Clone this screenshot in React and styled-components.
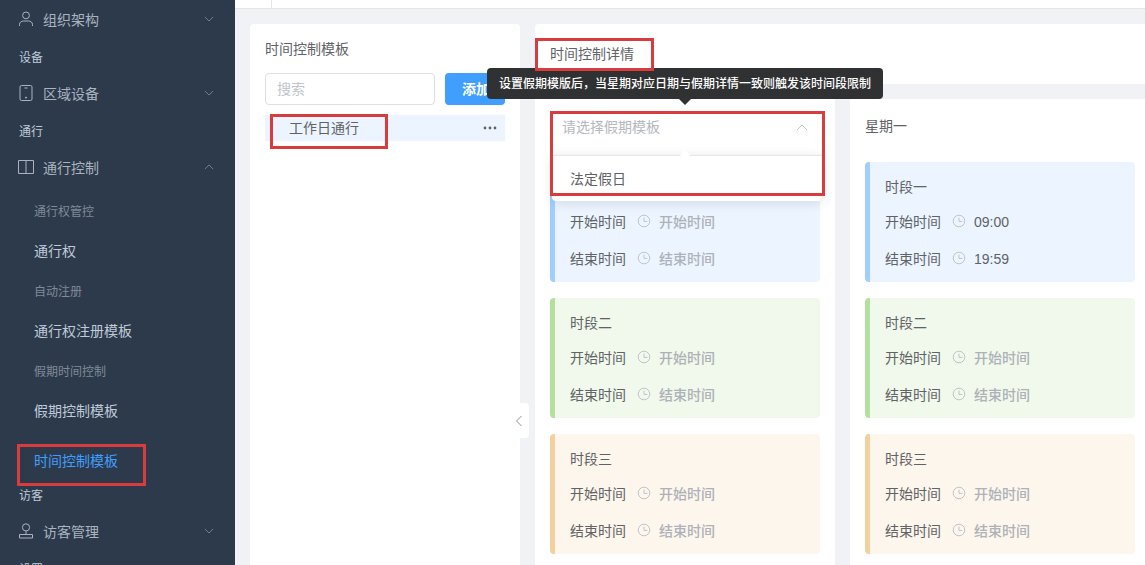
import React from 'react'
import styled, { createGlobalStyle } from 'styled-components'

const GlobalStyle = createGlobalStyle`
  html, body {
    margin: 0;
    height: 100%;
    overflow: hidden;
  }
  body {
    font-family: "Noto Sans CJK SC", "Liberation Sans", sans-serif;
    font-size: 14px;
    color: #606266;
  }
`

const Page = styled.div`
  display: flex;
  width: 100vw;
  height: 100vh;
  overflow: hidden;
  background: #f0f2f5;
`

const Sidebar = styled.aside`
  position: relative;
  flex: 0 0 235px;
  padding-top: 2px;
  box-sizing: border-box;
  background: #2d3a4b;
  overflow: hidden;
`

const GroupLabel = styled.div`
  height: 37px;
  line-height: 35px;
  padding-left: 19px;
  font-size: 12px;
  color: #bfcbd9;
`

const MenuTitle = styled.div`
  display: flex;
  align-items: center;
  height: 37px;
  box-sizing: border-box;
  padding: 0 21px 3px 18px;
  color: #a9b4c0;

  svg.main {
    width: 16px;
    height: 16px;
    margin-right: 9px;
    flex: none;
  }
  span {
    flex: 1;
  }
`

const SubList = styled.div`
  margin-top: 4px;
`

const SubItem = styled.div`
  height: 40px;
  line-height: ${p => (p.$small ? '40px' : '38px')};
  padding-left: 34px;
  font-size: ${p => (p.$small ? '12px' : '14px')};
  color: ${p => (p.$small ? '#7f8b98' : '#bfcbd9')};
`

const ActiveItem = styled.div`
  height: 34px;
  line-height: 32px;
  margin: 13px 0 -1px;
  padding-left: 34px;
  color: #409eff;
`

const RedBox = styled.div`
  position: absolute;
  left: ${p => p.$x}px;
  top: ${p => p.$y}px;
  width: ${p => p.$w}px;
  height: ${p => p.$h}px;
  box-sizing: border-box;
  border: 3px solid #d83c3c;
  pointer-events: none;
  z-index: 5;
`

const Main = styled.main`
  flex: 1;
  min-width: 0;
  display: flex;
  flex-direction: column;
`

const TopBar = styled.div`
  flex: 0 0 9px;
  box-sizing: border-box;
  background: #fff;
  border-bottom: 1px solid #e6e6e6;
  padding-left: 36px;

  i {
    display: block;
    width: 1px;
    height: 8px;
    background: #e6e6e6;
  }
`

const Content = styled.div`
  flex: 1;
  min-height: 0;
  display: flex;
  gap: 15px;
  padding: 15px 0 0 15px;
`

const LeftPanel = styled.section`
  position: relative;
  flex: 0 0 270px;
  box-sizing: border-box;
  padding: 14px 15px 15px;
  background: #fff;
  border-radius: 4px 4px 0 0;
`

const PanelTitle = styled.div`
  height: 20px;
  line-height: 20px;
  margin-bottom: 15px;
  color: #606266;
`

const SearchRow = styled.div`
  display: flex;
  gap: 10px;
  margin-bottom: 10px;
`

const SearchInput = styled.div`
  flex: 1;
  height: 32px;
  line-height: 28px;
  box-sizing: border-box;
  padding-left: 11px;
  border: 1px solid #dcdfe6;
  border-radius: 4px;
  color: #c0c4cc;
`

const AddButton = styled.div`
  flex: 0 0 60px;
  height: 32px;
  line-height: 30px;
  box-sizing: border-box;
  padding-left: 17px;
  background: #409eff;
  border-radius: 4px;
  color: #fff;
  font-weight: 700;
`

const TemplateRow = styled.div`
  display: flex;
  align-items: center;
  justify-content: space-between;
  height: 26px;
  padding: 0 8px 0 24px;
  background: #ecf5ff;
  color: #606266;

  span {
    margin-bottom: 2px;
  }
  svg {
    width: 14px;
    height: 4px;
  }
`

const Collapse = styled.div`
  position: absolute;
  right: -9px;
  top: 379px;
  width: 19px;
  height: 35px;
  box-sizing: border-box;
  padding-right: 1px;
  display: flex;
  align-items: center;
  justify-content: center;
  background: #fff;
  border-radius: 4px;

  svg {
    width: 8px;
    height: 12px;
  }
`

const RightPanel = styled.section`
  position: relative;
  flex: 1;
  min-width: 0;
  display: flex;
  flex-direction: column;
  gap: 15px;
  overflow: visible;
`

const DetailHeader = styled.div`
  flex: 0 0 60px;
  box-sizing: border-box;
  padding: 19px 15px 0;
  line-height: 20px;
  background: #fff;
  border-radius: 4px 0 0 0;
  color: #606266;
`

const Columns = styled.div`
  flex: 1;
  min-height: 0;
  display: flex;
  gap: 15px;
  overflow: hidden;
`

const DayColumn = styled.div`
  position: relative;
  flex: 0 0 300px;
  box-sizing: border-box;
  padding: 12px 15px 0;
  background: #fff;
`

const DayTitle = styled.div`
  height: 32px;
  line-height: 28px;
  margin-bottom: 19px;
  color: #606266;
`

const SelectBox = styled.div`
  display: flex;
  align-items: center;
  justify-content: space-between;
  height: 32px;
  margin-bottom: 19px;
  padding: 0 12px;
  color: #b4b7be;

  span {
    margin-bottom: 2px;
  }
  svg {
    width: 12px;
    height: 8px;
  }
`

const SlotCard = styled.div`
  box-sizing: border-box;
  height: 120px;
  margin-bottom: 16px;
  padding: 12px 0 0 15px;
  border-left: 5px solid ${p => p.$edge};
  border-radius: 4px;
  background: ${p => p.$bg};
`

const SlotTitle = styled.div`
  height: 24px;
  line-height: 24px;
  margin-bottom: 11px;
  color: #606266;
`

const TimeRow = styled.div`
  display: flex;
  align-items: center;
  height: 24px;
  margin-bottom: 13px;
  color: #606266;

  svg {
    width: 14px;
    height: 14px;
    margin: 0 8px 0 11px;
    flex: none;
  }
`

const TimeValue = styled.span`
  margin-top: ${p => (p.$empty ? 0 : '2px')};
  color: ${p => (p.$empty ? '#aeb1b8' : '#606266')};
  font-weight: ${p => (p.$empty ? 500 : 400)};
  font-family: ${p => (p.$empty ? 'inherit' : '"Liberation Sans", sans-serif')};
`

const Tooltip = styled.div`
  position: absolute;
  left: -48px;
  top: 44px;
  width: 396px;
  height: 31px;
  line-height: 30px;
  text-align: center;
  font-size: 12px;
  font-weight: 500;
  color: #fff;
  background: #303133;
  border-radius: 4px;
  z-index: 4;

  &::after {
    content: '';
    position: absolute;
    left: 192px;
    bottom: -6px;
    border: 6px solid transparent;
    border-bottom: 0;
    border-top-color: #303133;
  }
`

const Dropdown = styled.div`
  position: absolute;
  left: 17px;
  top: 56px;
  width: 270px;
  height: 46px;
  box-sizing: border-box;
  padding-left: 18px;
  line-height: 45px;
  background: #fff;
  border-top: 1px solid #e4e7ed;
  border-radius: 0 0 4px 4px;
  box-shadow: 0 2px 12px rgba(0, 0, 0, 0.12);
  color: #606266;
  z-index: 3;

  &::before {
    content: '';
    position: absolute;
    left: 127px;
    top: -7px;
    width: 12px;
    height: 12px;
    background: #fff;
    transform: rotate(45deg) scale(0.6);
  }
`

const Clock = () => (
  <svg viewBox="0 0 14 14" fill="none" stroke="#c0c4cc" strokeWidth="1">
    <circle cx="7" cy="7" r="5.8" />
    <path d="M7 3.6V7.4H10.4" />
  </svg>
)

const Chevron = ({ up }) => (
  <svg viewBox="0 0 12 12" fill="none" stroke="#7f8b98" strokeWidth="1" width="10" height="10">
    <path d={up ? 'M1 8.5L6 3.5L11 8.5' : 'M1 3.5L6 8.5L11 3.5'} />
  </svg>
)

const UserIcon = () => (
  <svg className="main" viewBox="0 0 16 16" fill="none" stroke="#a9b4c0" strokeWidth="1">
    <circle cx="8" cy="4.4" r="3.4" />
    <path d="M1.5 15V13.5C1.5 11.2 3.6 10 5.6 10H10.4C12.4 10 14.5 11.2 14.5 13.5V15" />
  </svg>
)

const TabletIcon = () => (
  <svg className="main" viewBox="0 0 16 16" fill="none" stroke="#a9b4c0" strokeWidth="1">
    <rect x="2" y="0.5" width="12" height="15" rx="1.5" />
    <path d="M6.5 3H9.5" />
    <circle cx="8" cy="12.6" r="0.6" fill="#a9b4c0" />
  </svg>
)

const BookIcon = () => (
  <svg className="main" viewBox="0 0 16 16" fill="none" stroke="#a9b4c0" strokeWidth="1">
    <path d="M0.5 1.5H8V14.5H0.5Z" />
    <path d="M8 1.5H15.5V14.5H8" />
  </svg>
)

const VisitorIcon = () => (
  <svg className="main" viewBox="0 0 16 16" fill="none" stroke="#a9b4c0" strokeWidth="1">
    <circle cx="8" cy="4.4" r="3.6" />
    <path d="M8 8V11.5M1.5 11.5H14.5V15H1.5Z" />
  </svg>
)

const slots = [
  { name: '时段一', bg: '#ecf5ff', edge: '#a0cfff' },
  { name: '时段二', bg: '#f0f9eb', edge: '#b3e19d' },
  { name: '时段三', bg: '#fdf6ec', edge: '#f3d19e' },
]

const Slot = ({ slot, start, end }) => (
  <SlotCard $bg={slot.bg} $edge={slot.edge}>
    <SlotTitle>{slot.name}</SlotTitle>
    <TimeRow>
      开始时间<Clock />
      <TimeValue $empty={!start}>{start || '开始时间'}</TimeValue>
    </TimeRow>
    <TimeRow>
      结束时间<Clock />
      <TimeValue $empty={!end}>{end || '结束时间'}</TimeValue>
    </TimeRow>
  </SlotCard>
)

export default function App() {
  return (
    <Page>
      <GlobalStyle />
      <Sidebar>
        <MenuTitle><UserIcon /><span>组织架构</span><Chevron /></MenuTitle>
        <GroupLabel>设备</GroupLabel>
        <MenuTitle><TabletIcon /><span>区域设备</span><Chevron /></MenuTitle>
        <GroupLabel>通行</GroupLabel>
        <MenuTitle><BookIcon /><span>通行控制</span><Chevron up /></MenuTitle>
        <SubList>
          <SubItem $small>通行权管控</SubItem>
          <SubItem>通行权</SubItem>
          <SubItem $small>自动注册</SubItem>
          <SubItem>通行权注册模板</SubItem>
          <SubItem $small>假期时间控制</SubItem>
          <SubItem>假期控制模板</SubItem>
          <ActiveItem>时间控制模板</ActiveItem>
        </SubList>
        <GroupLabel>访客</GroupLabel>
        <MenuTitle><VisitorIcon /><span>访客管理</span><Chevron /></MenuTitle>
        <GroupLabel>设置</GroupLabel>
        <RedBox $x={17} $y={444} $w={129} $h={42} />
      </Sidebar>
      <Main>
        <TopBar><i /></TopBar>
        <Content>
          <LeftPanel>
            <PanelTitle>时间控制模板</PanelTitle>
            <SearchRow>
              <SearchInput>搜索</SearchInput>
              <AddButton>添加</AddButton>
            </SearchRow>
            <TemplateRow>
              <span>工作日通行</span>
              <svg viewBox="0 0 14 4" fill="#606266">
                <circle cx="2" cy="2" r="1.4" />
                <circle cx="7" cy="2" r="1.4" />
                <circle cx="12" cy="2" r="1.4" />
              </svg>
            </TemplateRow>
            <RedBox $x={20} $y={90} $w={118} $h={35} />
            <Collapse>
              <svg viewBox="0 0 8 12" fill="none" stroke="#909399" strokeWidth="1">
                <path d="M6.5 1L1.5 6L6.5 11" />
              </svg>
            </Collapse>
          </LeftPanel>
          <RightPanel>
            <DetailHeader>时间控制详情</DetailHeader>
            <RedBox $x={0} $y={14} $w={119} $h={33} />
            <Tooltip>设置假期模版后，当星期对应日期与假期详情一致则触发该时间段限制</Tooltip>
            <Columns>
              <DayColumn>
                <SelectBox>
                  <span>请选择假期模板</span>
                  <svg viewBox="0 0 12 8" fill="none" stroke="#c0c4cc" strokeWidth="1">
                    <path d="M1 7L6 2L11 7" />
                  </svg>
                </SelectBox>
                <Dropdown>法定假日</Dropdown>
                {slots.map(slot => <Slot key={slot.name} slot={slot} />)}
              </DayColumn>
              <DayColumn>
                <DayTitle>星期一</DayTitle>
                {slots.map((slot, i) => (
                  <Slot
                    key={slot.name}
                    slot={slot}
                    start={i === 0 ? '09:00' : ''}
                    end={i === 0 ? '19:59' : ''}
                  />
                ))}
              </DayColumn>
            </Columns>
            <RedBox $x={15} $y={87} $w={275} $h={85} />
          </RightPanel>
        </Content>
      </Main>
    </Page>
  )
}
